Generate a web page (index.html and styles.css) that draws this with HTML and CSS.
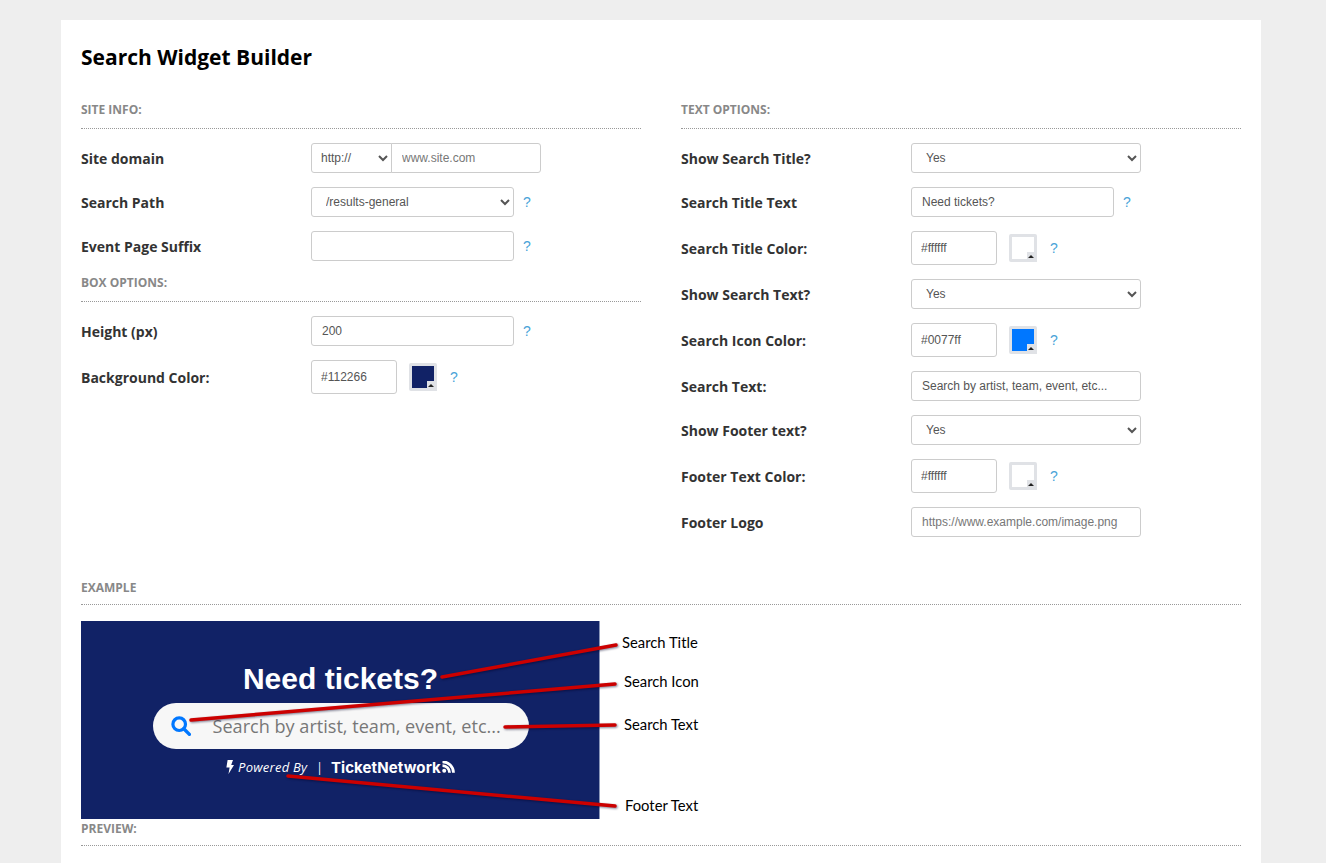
FILE: index.html
```html
<!DOCTYPE html>
<html>
<head>
 <title>Search Widget Builder</title>
 <meta charset="utf-8">
 <link rel="stylesheet" href="styles.css">
</head>
<body>
<div class="card">
	<h1 class="page-title">Search Widget Builder</h1>

	<div class="columns">
		<div class="column">
			<div class="section-head">SITE INFO:</div>
			<div class="form-row">
				<label class="form-label">Site domain</label>
				<div class="input-group">
					<select class="field select-proto"><option>http://</option></select>
					<input class="field input-domain" type="text" placeholder="www.site.com">
				</div>
			</div>
			<div class="form-row">
				<label class="form-label">Search Path</label>
				<select class="field w-203"><option>/results-general</option></select>
				<span class="help">?</span>
			</div>
			<div class="form-row">
				<label class="form-label">Event Page Suffix</label>
				<input class="field w-203" type="text">
				<span class="help">?</span>
			</div>

			<div class="section-head section-head-tight">BOX OPTIONS:</div>
			<div class="form-row">
				<label class="form-label">Height (px)</label>
				<input class="field w-203" type="text" value="200">
				<span class="help">?</span>
			</div>
			<div class="form-row">
				<label class="form-label">Background Color:</label>
				<input class="field field-color" type="text" value="#112266">
				<span class="swatch swatch-navy"></span>
				<span class="help help-color">?</span>
			</div>
		</div>

		<div class="column">
			<div class="section-head">TEXT OPTIONS:</div>
			<div class="form-row">
				<label class="form-label">Show Search Title?</label>
				<select class="field w-230"><option>Yes</option></select>
			</div>
			<div class="form-row">
				<label class="form-label">Search Title Text</label>
				<input class="field w-203" type="text" value="Need tickets?">
				<span class="help">?</span>
			</div>
			<div class="form-row">
				<label class="form-label">Search Title Color:</label>
				<input class="field field-color" type="text" value="#ffffff">
				<span class="swatch swatch-white"></span>
				<span class="help help-color">?</span>
			</div>
			<div class="form-row">
				<label class="form-label">Show Search Text?</label>
				<select class="field w-230"><option>Yes</option></select>
			</div>
			<div class="form-row">
				<label class="form-label">Search Icon Color:</label>
				<input class="field field-color" type="text" value="#0077ff">
				<span class="swatch swatch-blue"></span>
				<span class="help help-color">?</span>
			</div>
			<div class="form-row">
				<label class="form-label">Search Text:</label>
				<input class="field w-230" type="text" value="Search by artist, team, event, etc...">
			</div>
			<div class="form-row">
				<label class="form-label">Show Footer text?</label>
				<select class="field w-230"><option>Yes</option></select>
			</div>
			<div class="form-row">
				<label class="form-label">Footer Text Color:</label>
				<input class="field field-color" type="text" value="#ffffff">
				<span class="swatch swatch-white"></span>
				<span class="help help-color">?</span>
			</div>
			<div class="form-row">
				<label class="form-label">Footer Logo</label>
				<input class="field w-230" type="text" placeholder="https://www.example.com/image.png">
			</div>
		</div>
	</div>

	<div class="section-head section-head-wide section-head-example">EXAMPLE</div>
	<div class="example">
		<div class="banner">
			<div class="banner-title">Need tickets?</div>
			<div class="banner-search">
				<svg class="banner-icon" width="20" height="20" viewBox="0 0 20 20">
					<circle cx="8.2" cy="8.2" r="6.3" fill="none" stroke="#0077ff" stroke-width="3.2"/>
					<path d="M12.8 12.8 L18.4 18.4" fill="none" stroke="#0077ff" stroke-width="3.4" stroke-linecap="round"/>
				</svg>
				<span class="banner-placeholder">Search by artist, team, event, etc...</span>
			</div>
			<div class="banner-footer">
				<svg width="8" height="14" viewBox="0 0 8 14">
					<path d="M1.6 0 H7 L5.2 5 H8 L2.5 14 L3.6 7.6 H0.4 Z" fill="#fff"/>
				</svg>
				<span class="powered">Powered By</span>
				<span class="divider">|</span>
				<span class="brand">TicketNetwork</span>
				<svg class="brand-rss" width="13" height="12" viewBox="0 0 13 12">
					<circle cx="2.2" cy="9.8" r="2" fill="#fff"/>
					<path d="M0.5 4.6 A7 7 0 0 1 7.5 11.8 M0.5 0.8 A11 11 0 0 1 11.5 11.8" fill="none" stroke="#fff" stroke-width="2.8"/>
				</svg>
			</div>
		</div>
		<svg class="callouts" width="640" height="198" viewBox="0 0 640 198">
			<line x1="361" y1="56" x2="535" y2="24"/>
			<line x1="110" y1="99" x2="534" y2="63"/>
			<line x1="424" y1="106" x2="534" y2="104"/>
			<line x1="207" y1="155" x2="534" y2="185"/>
		</svg>
		<span class="callout-label callout-title">Search Title</span>
		<span class="callout-label callout-icon">Search Icon</span>
		<span class="callout-label callout-text">Search Text</span>
		<span class="callout-label callout-footer">Footer Text</span>
	</div>

	<div class="section-head section-head-wide">PREVIEW:</div>
</div>
</body>
</html>
```
FILE: styles.css
```css
html, body {
	margin: 0;
	padding: 0;
}

body {
	background: #eeeeee;
	padding-top: 20px;
	height: 843px;
	overflow: hidden;
	font-family: "Open Sans", sans-serif;
}

.card {
	box-sizing: border-box;
	width: 1200px;
	height: 843px;
	margin-left: 61px;
	padding: 22px 20px 0;
	background: #ffffff;
	overflow: hidden;
}

.page-title {
	margin: 0 0 28px;
	font-size: 21px;
	line-height: 30px;
	font-weight: 700;
	color: #000000;
}

.columns {
	display: flex;
	gap: 40px;
}

.column {
	width: 560px;
}

.section-head {
	height: 18px;
	padding-bottom: 10px;
	margin-bottom: 14px;
	border-bottom: 1px dotted #999999;
	font-size: 12px;
	line-height: 20px;
	font-weight: 700;
	color: #888888;
}

.section-head-tight {
	margin-top: -2px;
}

.section-head-wide {
	padding-bottom: 8px;
}

.section-head-example {
	margin-top: 27px;
	margin-bottom: 16px;
}

.form-row {
	display: flex;
	align-items: center;
	margin-bottom: 14px;
}

.form-label {
	width: 230px;
	flex: none;
	padding-top: 2px;
	font-size: 14px;
	line-height: 20px;
	font-weight: 700;
	color: #333333;
}

.field {
	box-sizing: border-box;
	height: 30px;
	margin: 0;
	padding: 0 10px;
	background-color: #ffffff;
	border: 1px solid #cccccc;
	border-radius: 3px;
	font-family: "Liberation Sans", Arial, sans-serif;
	font-size: 12px;
	color: #555555;
	outline: none;
}

.field::placeholder {
	color: #777777;
}

.w-203 {
	width: 203px;
}

.w-230 {
	width: 230px;
}

.field-color {
	width: 86px;
	height: 34px;
	padding: 0 9px;
}

.input-group {
	display: flex;
}

.select-proto {
	width: 81px;
	padding-left: 5px;
	border-radius: 3px 0 0 3px;
}

.input-domain {
	width: 150px;
	margin-left: -1px;
	border-radius: 0 3px 3px 0;
}

.help {
	margin-left: 9px;
	font-family: "Liberation Sans", Arial, sans-serif;
	font-size: 14px;
	color: #4aa3d8;
}

.help-color {
	margin-left: 13px;
}

.swatch {
	position: relative;
	box-sizing: border-box;
	width: 28px;
	height: 28px;
	margin-left: 12px;
	border: 3px solid #e0e2e6;
	border-radius: 2px;
}

.swatch::after {
	content: "";
	position: absolute;
	right: -3px;
	bottom: -3px;
	width: 10px;
	height: 10px;
	background: #e0e2e6;
}

.swatch::before {
	content: "";
	position: absolute;
	z-index: 1;
	right: 0;
	bottom: 1px;
	border-left: 3px solid transparent;
	border-right: 3px solid transparent;
	border-bottom: 3px solid #222222;
}

.swatch-navy { background: #112266; }
.swatch-white { background: #ffffff; }
.swatch-blue { background: #0077ff; }

.example {
	position: relative;
	height: 198px;
}

.banner {
	box-sizing: border-box;
	display: flex;
	flex-direction: column;
	align-items: center;
	width: 519px;
	height: 198px;
	padding: 40px 0 0 1px;
	background: #112266;
	border-right: 1px solid #8a96b8;
	color: #ffffff;
}

.banner-title {
	height: 36px;
	margin-bottom: 6px;
	font-family: "Liberation Sans", Arial, sans-serif;
	font-size: 30px;
	line-height: 36px;
	font-weight: 700;
}

.banner-search {
	display: flex;
	align-items: center;
	box-sizing: border-box;
	width: 376px;
	height: 46px;
	padding-left: 18px;
	background: #f7f7f7;
	border-radius: 23px;
}

.banner-icon {
	flex: none;
	margin-right: 22px;
}

.banner-placeholder {
	font-size: 18.1px;
	color: #777777;
	white-space: nowrap;
}

.banner-footer {
	display: flex;
	align-items: center;
	height: 18px;
	margin-top: 9px;
}

.powered {
	margin-left: 4px;
	font-size: 13px;
	font-style: italic;
	font-weight: 500;
	letter-spacing: 0.25px;
}

.divider {
	margin: 0 8px 0 9px;
	font-size: 12px;
}

.brand {
	font-family: Inter, "Open Sans", sans-serif;
	font-size: 15px;
	font-weight: 700;
	letter-spacing: 0.1px;
}

.brand-rss {
	margin-left: 1px;
}

.callouts {
	position: absolute;
	left: 0;
	top: 0;
	overflow: visible;
	filter: drop-shadow(1px 1px 1px rgba(0, 0, 40, 0.5));
}

.callouts line {
	stroke: #cc0000;
	stroke-width: 3.5;
	stroke-linecap: round;
}

.callout-label {
	position: absolute;
	font-family: Lato, "Open Sans", sans-serif;
	font-size: 14.8px;
	line-height: 18px;
	color: #000000;
	white-space: nowrap;
}

.callout-title { left: 541px; top: 12px; }
.callout-icon { left: 543px; top: 51px; }
.callout-text { left: 543px; top: 94px; }
.callout-footer { left: 544px; top: 175px; }
```
